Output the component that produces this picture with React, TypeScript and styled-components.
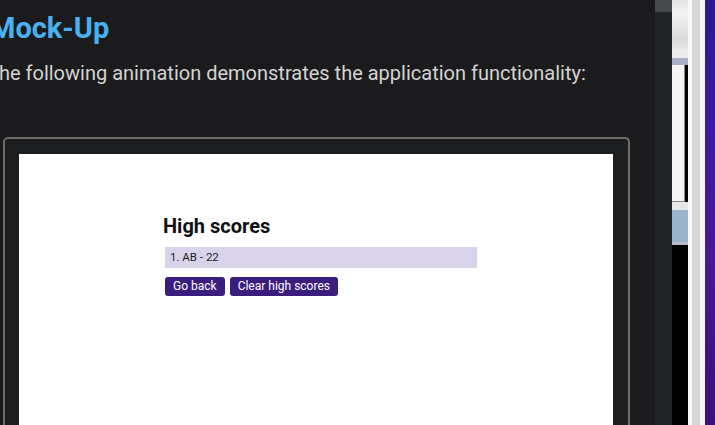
import React from 'react'
import styled, { createGlobalStyle } from 'styled-components'

const GlobalStyle = createGlobalStyle`
  html, body {
    margin: 0;
    padding: 0;
    width: 715px;
    height: 425px;
    overflow: hidden;
    background-color: #1b1b1d;
  }
  * {
    box-sizing: border-box;
  }
`

const Screen = styled.div`
  display: flex;
  width: 715px;
  height: 425px;
  overflow: hidden;
`

const Page = styled.main`
  width: 656px;
  height: 425px;
  overflow: hidden;
  background-color: #1b1b1d;
  font-family: Roboto, 'Noto Sans', sans-serif;
`

const Title = styled.h2`
  margin: 11px 0 0 -10px;
  font-size: 29px;
  font-weight: 700;
  line-height: 34px;
  color: #4ab1f1;
`

const Lead = styled.p`
  margin: 15px 0 0 -13px;
  font-size: 20px;
  line-height: 26px;
  color: #d3d3d3;
  white-space: nowrap;
`

const Frame = styled.figure`
  margin: 51px 0 0 3px;
  width: 627px;
  height: 300px;
  padding: 15px 15px 0 14px;
  border: 2px solid #6d6c65;
  border-bottom: none;
  border-radius: 5px 5px 0 0;
  background-color: #1d1e20;
`

const Shot = styled.div`
  height: 290px;
  background-color: #ffffff;
  padding: 59px 0 0 144px;
  font-family: Roboto, 'Noto Sans', sans-serif;
`

const ShotTitle = styled.h3`
  margin: 0 0 8px 0;
  font-size: 20px;
  font-weight: 700;
  line-height: 26px;
  color: #111111;
`

const ScoreList = styled.ol`
  list-style: none;
  margin: 0 0 9px 2px;
  padding: 0;
  width: 312px;
`

const ScoreItem = styled.li`
  height: 21px;
  padding-left: 5px;
  background-color: #d8d3ea;
  font-size: 11.5px;
  line-height: 21px;
  color: #1e1e1e;
`

const Actions = styled.div`
  display: flex;
  gap: 5px;
  margin-left: 2px;
`

const Button = styled.button`
  height: 19px;
  padding: 0 8px;
  border: none;
  border-radius: 3px;
  background-color: #3a1d7c;
  color: #ffffff;
  font-family: Roboto, 'Noto Sans', sans-serif;
  font-size: 12px;
  line-height: 19px;
  cursor: pointer;
`

const Scrollbar = styled.div`
  width: 17px;
  height: 425px;
  background-color: #222526;
`

const Thumb = styled.div`
  height: 12px;
  background-color: #45494c;
`

const Desktop = styled.div`
  display: flex;
  height: 425px;
`

const BackWindow = styled.div`
  display: flex;
  flex-direction: column;
  width: 16px;
  height: 425px;
  background-color: #000000;
`

const Strip = styled.div<{ $h: number; $bg: string; $line?: boolean }>`
  height: ${(p) => p.$h}px;
  flex-shrink: 0;
  background: ${(p) => p.$bg};
  border-right: ${(p) => (p.$line ? '1px solid #8a8a8a' : 'none')};
  border-bottom: ${(p) => (p.$line ? '1px solid #8a8a8a' : 'none')};
  margin-right: ${(p) => (p.$line ? '3px' : '0')};
`

const Band = styled.div<{ $w: number; $bg: string }>`
  width: ${(p) => p.$w}px;
  height: 425px;
  background: ${(p) => p.$bg};
`

export default function App() {
  return (
    <>
      <GlobalStyle />
      <Screen>
        <Page>
          <Title>Mock-Up</Title>
          <Lead>The following animation demonstrates the application functionality:</Lead>
          <Frame>
            <Shot>
              <ShotTitle>High scores</ShotTitle>
              <ScoreList>
                <ScoreItem>1. AB - 22</ScoreItem>
              </ScoreList>
              <Actions>
                <Button>Go back</Button>
                <Button>Clear high scores</Button>
              </Actions>
            </Shot>
          </Frame>
        </Page>
        <Scrollbar>
          <Thumb />
        </Scrollbar>
        <Desktop>
          <BackWindow>
            <Strip $h={49} $bg="linear-gradient(#e4e4e4, #f2f2f2 30%, #d9d9d9 80%, #e6e6e6)" />
            <Strip $h={9} $bg="#ececec" />
            <Strip $h={7} $bg="#abafc5" />
            <Strip $h={137} $bg="#f4f4f4" $line />
            <Strip $h={8} $bg="#e8e8e8" />
            <Strip $h={32} $bg="#9bb5cf" />
            <Strip $h={3} $bg="#b8bcc8" />
            <Strip $h={180} $bg="#000000" />
          </BackWindow>
          <Band $w={4} $bg="#f7f7f7" />
          <Band $w={8} $bg="#d6d6d6" />
          <Band $w={5} $bg="#f4f4f4" />
          <Band $w={10} $bg="linear-gradient(180deg, #2c1a8e, #3a1aa0 30%, #4a1890 60%, #3c0f7a)" />
        </Desktop>
      </Screen>
    </>
  )
}
